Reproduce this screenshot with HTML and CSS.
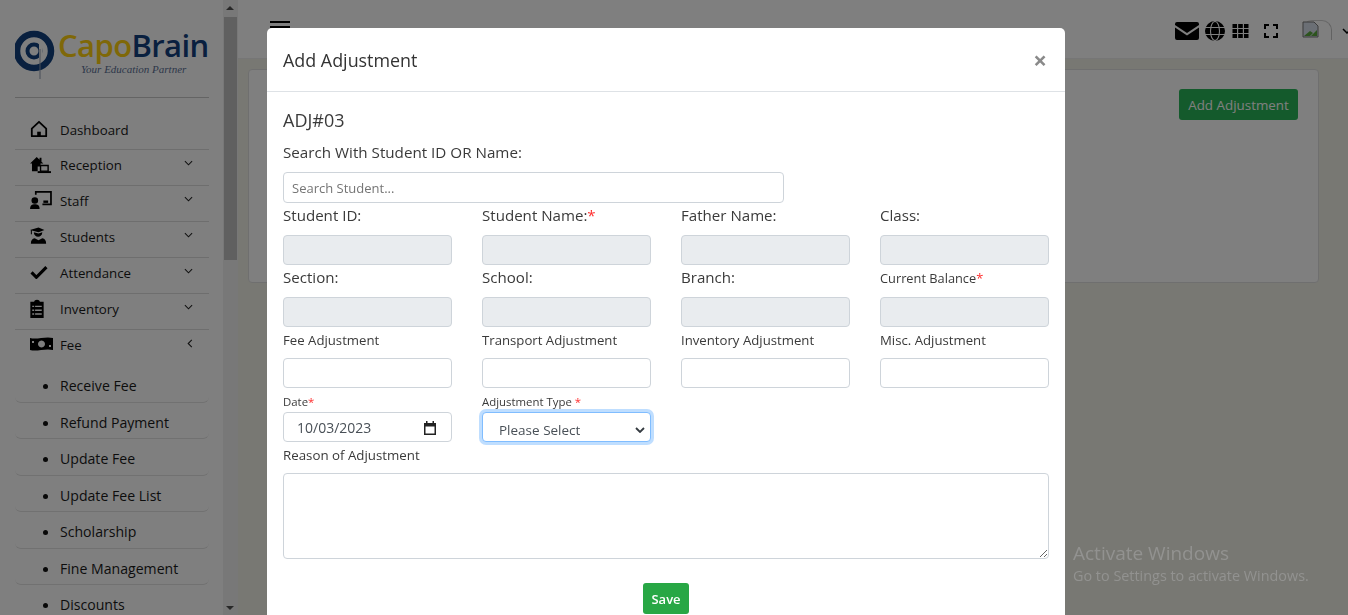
FILE: index.html
```html
<!DOCTYPE html>
<html lang="en">

<head>
    <meta charset="UTF-8">
    <meta name="viewport" content="width=device-width, initial-scale=1.0">
    <title>Add Adjustment</title>
    <link rel="stylesheet" href="styles.css">
</head>

<body>
    <div class="app">
        <aside class="sidebar">
            <div class="logo">
                <svg class="logo-mark" viewBox="0 0 40 52" width="40" height="52">
                    <circle cx="19" cy="21" r="17" fill="none" stroke="#12407e" stroke-width="6.500"/>
                    <circle cx="19" cy="21" r="6.500" fill="none" stroke="#12407e" stroke-width="4"/>
                    <path d="M24 12h3.500v16H24z" fill="#fff"/>
                    <rect x="24.500" y="19" width="1" height="30" fill="#8f9cb0"/>
                </svg>
                <div class="logo-text">
                    <div class="logo-name"><span class="capo">Capo</span><span class="brain">Brain</span></div>
                    <div class="logo-tag">Your Education Partner</div>
                </div>
            </div>

            <ul class="menu">
                <li class="menu-item first">
                    <svg class="menu-icon" viewBox="0 0 20 20" width="18" height="18"><path d="M2 9.500 10 2l8 7.500V18H2z" fill="none" stroke="#000" stroke-width="2" stroke-linejoin="round"/><rect x="8" y="13" width="4" height="5"/></svg>
                    <span>Dashboard</span>
                </li>
                <li class="menu-item">
                    <svg class="menu-icon" viewBox="0 0 23 20" width="22" height="19"><path d="M0 9 7 2l3 3V3h2v4l2 2h-3v3H8v5H2V9z"/><path d="M11 11h8v6h-8z" fill="none" stroke="#000" stroke-width="1.500"/><rect x="8" y="17" width="14" height="2"/></svg>
                    <span>Reception</span>
                    <svg class="chev" viewBox="0 0 10 6" width="9" height="6"><path d="M1 1l4 4 4-4" fill="none" stroke="#222" stroke-width="1.200"/></svg>
                </li>
                <li class="menu-item">
                    <svg class="menu-icon" viewBox="0 0 23 20" width="22" height="19"><circle cx="5" cy="10" r="3.500"/><path d="M0 19c0-4 2-5 5-5s5 1 5 5z"/><path d="M6 4V1h16v13h-9" fill="none" stroke="#000" stroke-width="1.800"/><rect x="14" y="10" width="5" height="2.500"/></svg>
                    <span>Staff</span>
                    <svg class="chev" viewBox="0 0 10 6" width="9" height="6"><path d="M1 1l4 4 4-4" fill="none" stroke="#222" stroke-width="1.200"/></svg>
                </li>
                <li class="menu-item">
                    <svg class="menu-icon" viewBox="0 0 20 20" width="17" height="18"><path d="M0 3 10 0l7 3-7 2.500z"/><rect x="1" y="3" width="1.200" height="5"/><path d="M4.500 5.500c0 7 10 7 10 0l-4.500 1.500z"/><path d="M1 19c0-4 1.500-6 4.500-6.500L10 15l4.500-2.500c3 .5 4.500 2.500 4.500 6.500z"/></svg>
                    <span>Students</span>
                    <svg class="chev" viewBox="0 0 10 6" width="9" height="6"><path d="M1 1l4 4 4-4" fill="none" stroke="#222" stroke-width="1.200"/></svg>
                </li>
                <li class="menu-item">
                    <svg class="menu-icon" viewBox="0 0 20 16" width="18" height="14"><path d="M1.500 8.500 7 14 18.500 2.500" fill="none" stroke="#000" stroke-width="3.600"/></svg>
                    <span>Attendance</span>
                    <svg class="chev" viewBox="0 0 10 6" width="9" height="6"><path d="M1 1l4 4 4-4" fill="none" stroke="#222" stroke-width="1.200"/></svg>
                </li>
                <li class="menu-item">
                    <svg class="menu-icon" viewBox="2 0 14 20" width="14" height="19"><path fill-rule="evenodd" d="M2 3h4c0-3 6-3 6 0h4v17H2zM7 7v1.500h7V7zM7 11v1.500h7V11zM7 15v1.500h7V15zM4 7v1.500h2V7zM4 11v1.500h2V11zM4 15v1.500h2V15z"/></svg>
                    <span>Inventory</span>
                    <svg class="chev" viewBox="0 0 10 6" width="9" height="6"><path d="M1 1l4 4 4-4" fill="none" stroke="#222" stroke-width="1.200"/></svg>
                </li>
                <li class="menu-item open">
                    <svg class="menu-icon" viewBox="0 0 23 16" width="23" height="16"><path fill-rule="evenodd" d="M0 2c7 2 15-2 23 0v12c-8-2-16 2-23 0zM11.500 4.500a3.500 3.500 0 1 0 .01 0zM2 5v2h2V5zM19 9v2h2V9z"/></svg>
                    <span>Fee</span>
                    <svg class="chev" viewBox="0 0 6 10" width="6" height="9"><path d="M5 1 1 5l4 4" fill="none" stroke="#222" stroke-width="1.200"/></svg>
                </li>
                <li class="sub-item">Receive Fee</li>
                <li class="sub-item">Refund Payment</li>
                <li class="sub-item">Update Fee</li>
                <li class="sub-item">Update Fee List</li>
                <li class="sub-item">Scholarship</li>
                <li class="sub-item">Fine Management</li>
                <li class="sub-item">Discounts</li>
            </ul>
        </aside>

        <div class="scrollbar">
            <span class="arrow-up"></span>
            <div class="thumb"></div>
            <span class="arrow-down"></span>
        </div>

        <main class="main">
            <header class="topbar">
                <div class="burger"><i></i><i></i><i></i></div>
                <div class="top-icons">
                    <svg viewBox="0 0 24 18" width="24" height="18"><path d="M2 0h20a2 2 0 0 1 2 2v1L12 11 0 3V2a2 2 0 0 1 2-2zM0 5.500l12 8 12-8V16a2 2 0 0 1-2 2H2a2 2 0 0 1-2-2z"/></svg>
                    <svg class="ic-globe" viewBox="0 0 20 20" width="20" height="20"><circle cx="10" cy="10" r="10"/><ellipse cx="10" cy="10" rx="4.500" ry="9.500" fill="none" stroke="#fff" stroke-width="1.100"/><path d="M0 6.500h20M0 13.500h20" stroke="#fff" stroke-width="1.100"/></svg>
                    <svg class="ic-grid" viewBox="0 0 16 14" width="17" height="14"><path d="M0 0h4.500v4H0zM5.700 0h4.600v4H5.700zM11.500 0H16v4h-4.500zM0 5h4.500v4H0zM5.700 5h4.600v4H5.700zM11.500 5H16v4h-4.500zM0 10h4.500v4H0zM5.700 10h4.600v4H5.700zM11.500 10H16v4h-4.500z"/></svg>
                    <svg class="ic-full" viewBox="0 0 14 14" width="14" height="14"><path d="M1 5V1h4M9 1h4v4M13 9v4H9M5 13H1V9" fill="none" stroke="#000" stroke-width="2"/></svg>
                    <span class="avatar">
                        <svg viewBox="0 0 17 17" width="17" height="17"><path d="M1 1h11l4 4v11H1z" fill="#d6dfeb" stroke="#777"/><path d="M2 15l6-5 3 2-3 3z" fill="#5aa83c"/><path d="M9 15l6-6v6z" fill="#5aa83c"/></svg>
                    </span>
                    <svg class="ic-chev" viewBox="0 0 10 6" width="10" height="6"><path d="M1 1l4 4 4-4" fill="none" stroke="#000" stroke-width="1.500"/></svg>
                </div>
            </header>
            <section class="content">
                <div class="card">
                    <button class="btn-add" type="button">Add Adjustment</button>
                </div>
            </section>
        </main>
    </div>

    <div class="overlay"></div>
    <div class="watermark">
        <div class="wm-title">Activate Windows</div>
        <div class="wm-sub">Go to Settings to activate Windows.</div>
    </div>

    <div class="modal">
        <div class="modal-header">
            <h5>Add Adjustment</h5>
            <span class="close">&times;</span>
        </div>
        <form class="modal-body">
            <h4 class="adj-no">ADJ#03</h4>
            <label class="search-label" for="search">Search With Student ID OR Name:</label>
            <input class="control search" id="search" type="text" placeholder="Search Student...">

            <div class="form-row">
                <div class="field"><label>Student ID:</label><input class="control" disabled></div>
                <div class="field"><label>Student Name:<b>*</b></label><input class="control" disabled></div>
                <div class="field"><label>Father Name:</label><input class="control" disabled></div>
                <div class="field"><label>Class:</label><input class="control" disabled></div>
            </div>
            <div class="form-row">
                <div class="field"><label>Section:</label><input class="control" disabled></div>
                <div class="field"><label>School:</label><input class="control" disabled></div>
                <div class="field"><label>Branch:</label><input class="control" disabled></div>
                <div class="field"><label class="small">Current Balance<b>*</b></label><input class="control" disabled></div>
            </div>
            <div class="form-row row-adjust">
                <div class="field"><label>Fee Adjustment</label><input class="control"></div>
                <div class="field"><label>Transport Adjustment</label><input class="control"></div>
                <div class="field"><label>Inventory Adjustment</label><input class="control"></div>
                <div class="field"><label>Misc. Adjustment</label><input class="control"></div>
            </div>
            <div class="form-row row-date">
                <div class="field">
                    <label>Date<b>*</b></label>
                    <div class="control date-box">
                        <span>10/03/2023</span>
                        <svg viewBox="0 0 14 14" width="14" height="14"><path d="M3 0h1.500v2h5V0H11v2h2v12H1V2h2zM2.500 5.500v7h9v-7z" fill="#222"/></svg>
                    </div>
                </div>
                <div class="field">
                    <label>Adjustment Type <b>*</b></label>
                    <div class="control select-box">
                        <span>Please Select</span>
                        <svg viewBox="0 0 10 6" width="10" height="6"><path d="M1 1l4 4 4-4" fill="none" stroke="#343a40" stroke-width="1.800"/></svg>
                    </div>
                </div>
            </div>
            <label class="reason-label" for="reason">Reason of Adjustment</label>
            <textarea class="control reason" id="reason"></textarea>
            <div class="actions"><button class="btn-save" type="button">Save</button></div>
        </form>
    </div>
</body>

</html>
```

FILE: styles.css
```css
* {
    box-sizing: border-box;
}

html,
body {
    margin: 0;
    height: 615px;
    overflow: hidden;
}

body {
    font-family: "Open Sans", "Noto Sans", Arial, sans-serif;
    color: #212529;
}

.app {
    display: flex;
    height: 615px;
}

.sidebar {
    width: 223px;
    flex: none;
    background: #fff;
    padding: 30px 14px 0 15px;
    overflow: hidden;
}

.logo {
    display: flex;
    height: 68px;
    border-bottom: 1px solid #c9c9c9;
}

.logo-mark {
    flex: none;
}

.logo-text {
    margin-left: 3px;
}

.logo-name {
    font-size: 31px;
    line-height: 31px;
    font-weight: 600;
    letter-spacing: -0.6px;
    white-space: nowrap;
}

.capo {
    color: #ffd010;
}

.brain {
    color: #12407e;
}

.logo-tag {
    font-family: "Liberation Serif", serif;
    font-style: italic;
    font-size: 11px;
    line-height: 14px;
    margin: 1px 0 0 23px;
    color: #5a6f94;
    white-space: nowrap;
}

.menu {
    list-style: none;
    margin: 16px 0 0;
    padding: 0;
}

.menu-item {
    display: grid;
    grid-template-columns: 30px 1fr auto;
    align-items: center;
    height: 36px;
    padding: 0 0 5px 15px;
    font-size: 13.300px;
    border-bottom: 1px solid #dcdcdc;
    color: #1a1a1a;
}

.menu-item.first {
    padding-bottom: 4px;
}

.menu-item.open {
    padding-bottom: 6px;
    border-bottom: 0;
}

.menu-icon {
    margin-top: -2px;
}

.chev {
    margin-right: 16px;
    margin-top: -4px;
}

.sub-item {
    height: 36.500px;
    padding: 2px 0 0 28px;
    line-height: 36px;
    font-size: 14.100px;
    color: #1a1a1a;
    border-bottom: 1px solid #e2e2e2;
    border-radius: 0 0 6px 6px;
}

.sub-item::before {
    content: "";
    display: inline-block;
    width: 5px;
    height: 5px;
    margin-right: 12px;
    vertical-align: 2px;
    background: #111;
    border-radius: 50%;
}

.scrollbar {
    width: 15px;
    flex: none;
    background: #f1f1f1;
    position: relative;
    padding: 17px 1px;
}

.thumb {
    height: 243px;
    background: #c1c1c1;
}

.arrow-up,
.arrow-down {
    position: absolute;
    left: 3px;
    width: 0;
    height: 0;
    border-left: 4px solid transparent;
    border-right: 4px solid transparent;
}

.arrow-up {
    top: 6px;
    border-bottom: 4px solid #505050;
}

.arrow-down {
    bottom: 5px;
    border-top: 4px solid #505050;
}

.main {
    flex: 1;
    min-width: 0;
    display: flex;
    flex-direction: column;
    background: #f0f0e6;
}

.topbar {
    height: 59px;
    background: #fff;
    display: flex;
    justify-content: space-between;
    padding: 21px 0 0 32px;
    border-bottom: 1px solid #ececec;
}

.burger i {
    display: block;
    height: 2px;
    margin-bottom: 3px;
    background: #000;
    width: 20px;
}

.burger i:last-child {
    width: 15px;
}

.top-icons {
    display: flex;
    align-items: center;
    height: 20px;
}

.ic-globe {
    margin-left: 6px;
}

.ic-grid {
    margin-left: 7px;
}

.ic-full {
    margin-left: 15px;
}

.avatar {
    display: block;
    width: 30px;
    height: 20px;
    margin-left: 24px;
    margin-top: -3px;
    border-top: 1px solid #d0d0d0;
    border-right: 1px solid #c4c4c4;
    border-radius: 10px 10px 0 0;
}

.avatar svg {
    display: block;
}

.ic-chev {
    flex: none;
    margin-left: 10px;
    margin-right: -4px;
}

.content {
    padding: 10px 29px 0 10px;
}

.card {
    height: 214px;
    background: #fff;
    border: 1px solid #dfdfdf;
    border-radius: 4px;
    display: flex;
    justify-content: flex-end;
    align-items: flex-start;
    padding: 19px 20px 0 0;
}

.btn-add {
    height: 31px;
    width: 119px;
    padding: 0;
    font-family: inherit;
    font-size: 13.400px;
    background: #28b558;
    color: #fff;
    border: none;
    border-radius: 3px;
}

.overlay {
    position: fixed;
    inset: 0;
    background: rgba(0, 0, 0, 0.5);
}

.watermark {
    position: fixed;
    left: 1073px;
    top: 541px;
    color: #929290;
}

.wm-title {
    font-size: 19px;
    line-height: 24px;
}

.wm-sub {
    font-size: 14.400px;
    line-height: 22px;
    white-space: nowrap;
}

.modal {
    position: fixed;
    left: 267px;
    top: 28px;
    width: 798px;
    height: 620px;
    background: #fff;
    border-radius: 5px;
}

.modal-header {
    display: flex;
    justify-content: space-between;
    align-items: center;
    height: 64px;
    padding: 0 18px 0 16px;
    border-bottom: 1px solid #dee2e6;
}

.modal-header h5 {
    margin: 0;
    font-size: 17.900px;
    font-weight: 400;
    color: #333;
}

.close {
    font-size: 24px;
    font-weight: 700;
    color: #8a8a8a;
}

.modal-body {
    padding: 16px;
    display: block;
    font-size: 15px;
    color: #3a3a3a;
}

.adj-no {
    margin: 0;
    font-size: 18px;
    font-weight: 400;
    line-height: 24px;
}

.search-label {
    display: block;
    margin-top: 7px;
    font-size: 15.200px;
    line-height: 26px;
}

.control {
    display: block;
    width: 100%;
    height: 30px;
    font-family: inherit;
    font-size: 13px;
    color: #495057;
    background: #fff;
    border: 1px solid #ced4da;
    border-radius: 4px;
    padding: 0 8px;
}

.control:disabled {
    background: #e9ecef;
}

.search {
    width: 501px;
    height: 31px;
    margin-top: 7px;
}

.form-row {
    display: grid;
    grid-template-columns: repeat(4, 169px);
    column-gap: 30px;
}

.field label {
    display: block;
    height: 32px;
    line-height: 25px;
    font-size: 15.100px;
}

.form-row .field label.small {
    font-size: 12.800px;
    line-height: 27px;
}

.field b {
    color: #ff3030;
    font-weight: 400;
}

.row-adjust .field label {
    height: 31px;
    font-size: 13.200px;
    line-height: 26px;
}

.row-date .field label {
    height: 24px;
    font-size: 11.400px;
    line-height: 28px;
}

.date-box,
.select-box {
    display: flex;
    align-items: center;
    justify-content: space-between;
    font-size: 13.500px;
}

.date-box {
    padding: 1px 14px 0 13px;
    font-size: 14px;
}

.select-box {
    border-color: #80bdff;
    box-shadow: 0 0 0 3px rgba(0, 123, 255, 0.25);
    padding: 6px 5px 0 16px;
}

.reason-label {
    display: block;
    height: 31px;
    font-size: 13.300px;
    line-height: 26px;
}

.reason {
    height: 86px;
    resize: vertical;
}

.actions {
    display: flex;
    justify-content: center;
    margin-top: 24px;
}

.btn-save {
    width: 46px;
    height: 31px;
    padding: 0;
    font-family: inherit;
    font-size: 13px;
    font-weight: 600;
    color: #fff;
    background: #28a745;
    border: none;
    border-radius: 3px;
}
```
